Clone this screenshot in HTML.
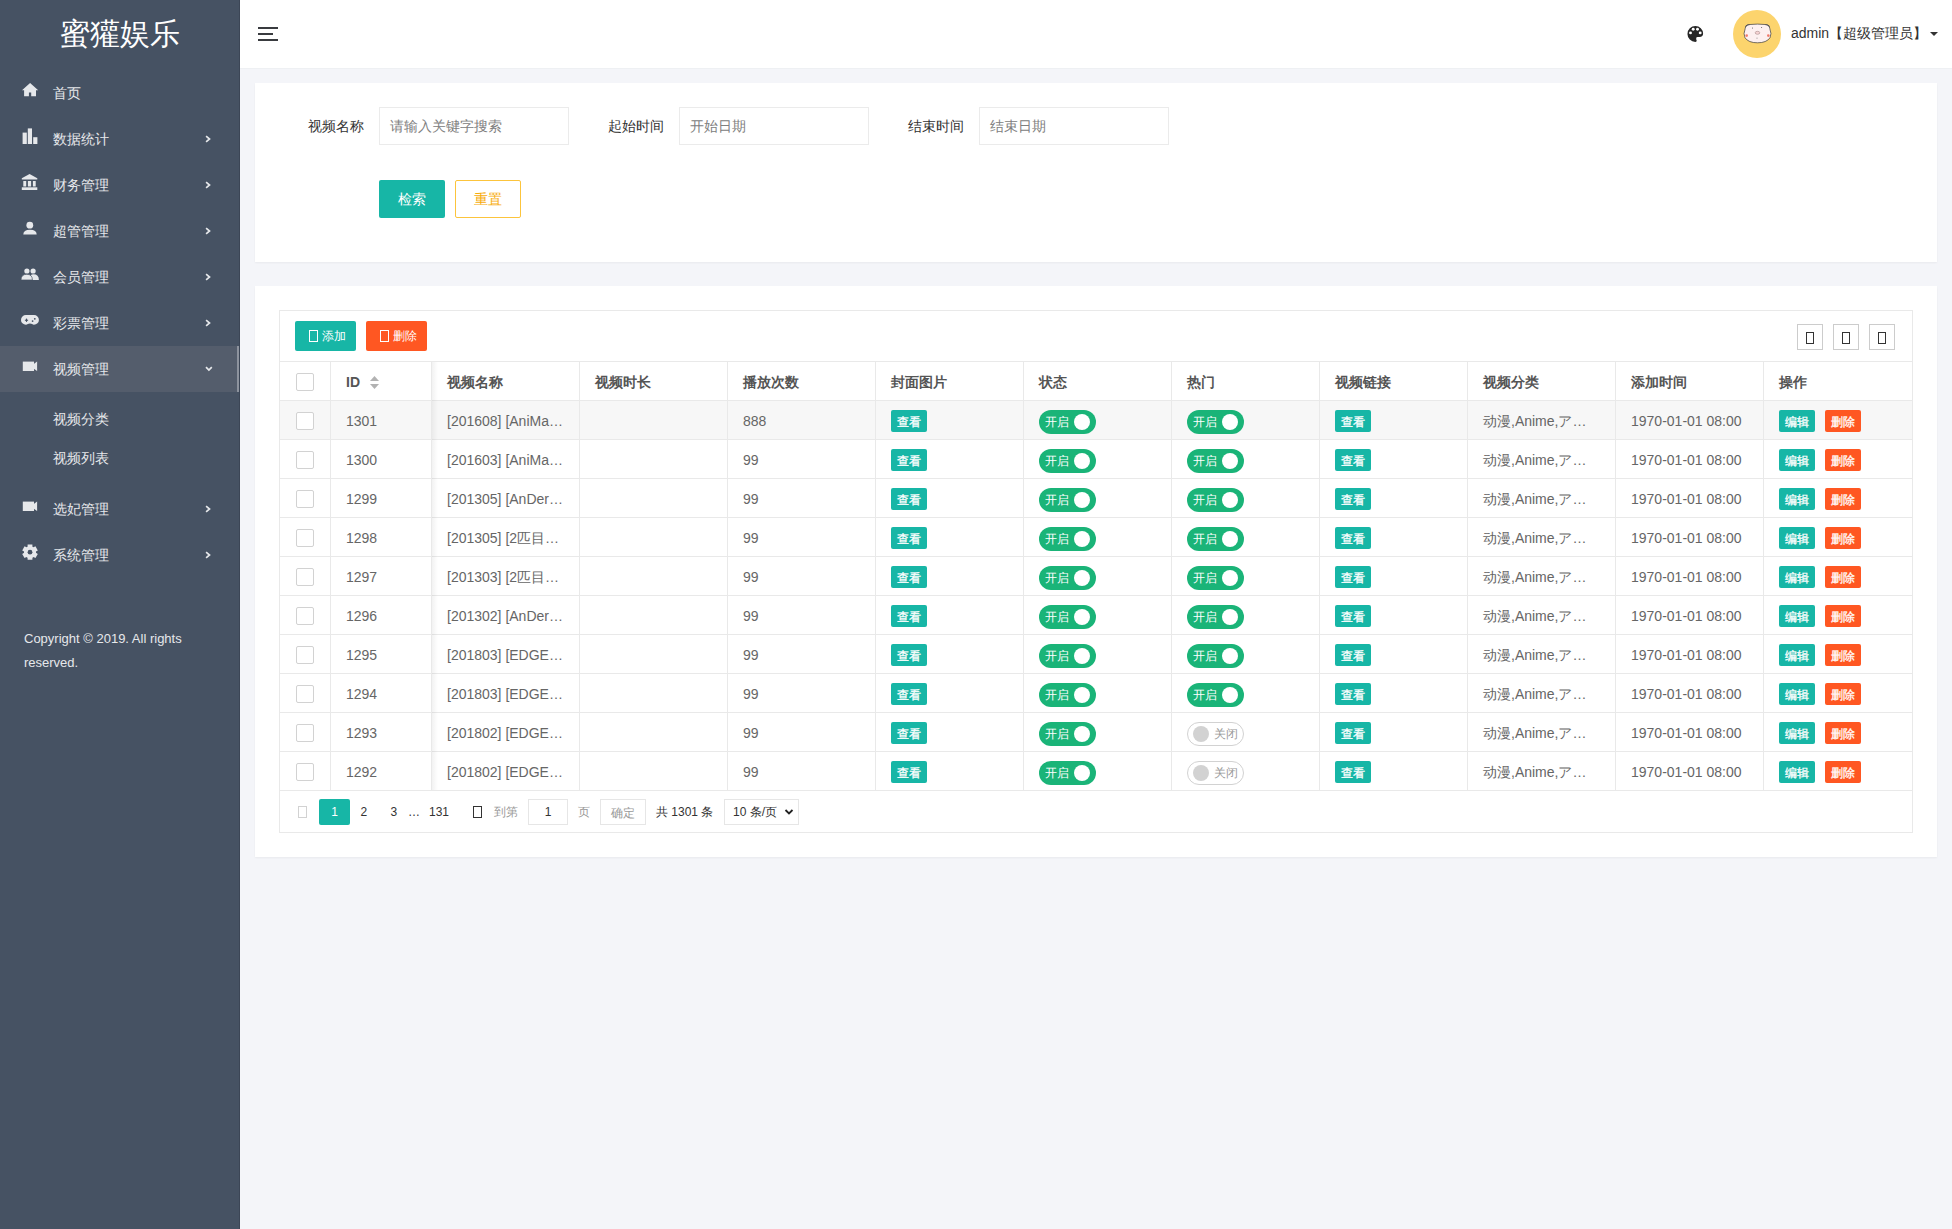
<!DOCTYPE html>
<html><head><meta charset="utf-8">
<style>
*{margin:0;padding:0;box-sizing:border-box;}
html,body{width:1952px;height:1229px;overflow:hidden;}
body{font-family:"Liberation Sans",sans-serif;background:#f4f5f9;position:relative;color:#666;font-size:14px;}
.abs{position:absolute;}
#side{position:absolute;left:0;top:0;width:240px;height:1229px;background:#465263;}
#logo{position:absolute;left:0;top:12px;width:240px;text-align:center;color:#fff;font-size:30px;line-height:44px;}
.nt{position:absolute;left:53px;line-height:47px;color:#e6e8eb;font-size:14px;white-space:nowrap;}
.nav .t{position:absolute;left:53px;top:0;line-height:46px;}
.nav .ic{position:absolute;left:22px;top:14px;width:16px;height:16px;}
.nav .ar{position:absolute;left:204px;top:16px;width:8px;height:10px;}
.nav.act{background:#535d6e;}
#copy{position:absolute;left:24px;top:627px;color:#e6e8eb;font-size:13px;line-height:24px;width:200px;}
#head{position:absolute;left:240px;top:0;width:1712px;height:68px;background:#fff;box-shadow:0 1px 0 #eef0f3;}
.card{position:absolute;background:#fff;box-shadow:0 1px 2px rgba(0,0,0,0.05);}
.lbl{position:absolute;color:#333;font-size:14px;line-height:38px;}
.inp{position:absolute;height:38px;width:190px;border:1px solid #ebebeb;background:#fff;color:#808080;font-size:14px;line-height:36px;padding-left:10px;}
.btn{position:absolute;color:#fff;text-align:center;font-size:14px;}
.tofu{display:inline-block;width:8px;height:13px;border:1px solid currentColor;vertical-align:-1px;}
.hl{position:absolute;background:#e9e9e9;height:1px;}
.vl{position:absolute;background:#e9e9e9;width:1px;}
.cell{position:absolute;line-height:39px;font-size:14px;color:#666;white-space:nowrap;}
.th{font-weight:bold;color:#555;}
.cb{position:absolute;width:18px;height:18px;border:1px solid #d2d2d2;border-radius:2px;background:#fff;}
.vbtn{position:absolute;-webkit-text-stroke:0.3px #fff;width:36px;height:22px;background:#17b6a6;color:#fff;font-size:12px;line-height:24px;text-align:center;border-radius:2px;}
.sw{position:absolute;width:57px;height:24px;border-radius:12px;background:#1ab478;color:#fff;font-size:12px;line-height:24px;}
.sw span{position:absolute;left:6px;top:0;}
.sw i{position:absolute;left:35px;top:4px;width:16px;height:16px;border-radius:50%;background:#fff;}
.sw.off{background:#fff;border:1px solid #d2d2d2;color:#999;}
.sw.off span{left:auto;right:5.5px;top:-1px;}
.sw.off i{left:5px;top:3px;background:#d2d2d2;}
.ebtn{position:absolute;-webkit-text-stroke:0.3px #fff;width:36px;height:22px;color:#fff;font-size:12px;line-height:24px;text-align:center;border-radius:2px;}
</style></head><body>
<div id="side">
<div id="logo">蜜獾娱乐</div>
<svg class="abs" style="left:21px;top:82px" width="18" height="17" viewBox="0 0 18 17"><path d="M9.1 0.9 L1 8.2 H3.1 V14.3 H7.9 V10.4 H10.2 V14.3 H15 V8.2 H17.2 Z" fill="#e6e8eb"/></svg>
<div class="nt" style="top:70px">首页</div>
<svg class="abs" style="left:21px;top:128px" width="18" height="17" viewBox="0 0 18 17"><rect x="1.6" y="4.6" width="4.2" height="11.4" fill="#e6e8eb"/><rect x="6.8" y="0.4" width="4.2" height="15.6" fill="#e6e8eb"/><rect x="12.2" y="9.2" width="4.2" height="6.8" fill="#e6e8eb"/></svg>
<div class="nt" style="top:116px">数据统计</div>
<svg class="abs" style="left:205px;top:135px" width="6" height="8" viewBox="0 0 6 8"><path d="M1.1 1.2 L4.5 4 L1.1 6.8" stroke="#e6e8eb" stroke-width="1.7" fill="none"/></svg>
<svg class="abs" style="left:21px;top:174px" width="18" height="17" viewBox="0 0 18 17"><path d="M8.55 0 L0.8 4.2 V5.5 H16.3 V4.2 Z" fill="#e6e8eb"/><rect x="2.3" y="7" width="2.9" height="5.5" fill="#e6e8eb"/><rect x="6.9" y="7" width="3.2" height="5.5" fill="#e6e8eb"/><rect x="11.9" y="7" width="2.8" height="5.5" fill="#e6e8eb"/><rect x="0.8" y="13.3" width="15.5" height="2.7" fill="#e6e8eb"/></svg>
<div class="nt" style="top:162px">财务管理</div>
<svg class="abs" style="left:205px;top:181px" width="6" height="8" viewBox="0 0 6 8"><path d="M1.1 1.2 L4.5 4 L1.1 6.8" stroke="#e6e8eb" stroke-width="1.7" fill="none"/></svg>
<svg class="abs" style="left:21px;top:220px" width="18" height="17" viewBox="0 0 18 17"><circle cx="8.8" cy="5.2" r="3.4" fill="#e6e8eb"/><path d="M2.3 14.5 Q2.3 9.7 9 9.7 Q15.7 9.7 15.7 14.5 Z" fill="#e6e8eb"/></svg>
<div class="nt" style="top:208px">超管管理</div>
<svg class="abs" style="left:205px;top:227px" width="6" height="8" viewBox="0 0 6 8"><path d="M1.1 1.2 L4.5 4 L1.1 6.8" stroke="#e6e8eb" stroke-width="1.7" fill="none"/></svg>
<svg class="abs" style="left:21px;top:266px" width="18" height="17" viewBox="0 0 18 17"><circle cx="5.9" cy="5" r="2.6" fill="#e6e8eb"/><circle cx="12.1" cy="5" r="2.6" fill="#e6e8eb"/><path d="M8.5 14 Q8.5 8.3 12.4 8.3 Q17.9 8.3 17.9 14 Z" fill="#e6e8eb"/><path d="M0 14 Q0 8.3 5.8 8.3 Q11.4 8.3 11.4 14 Z" fill="#e6e8eb" stroke="#465263" stroke-width="0.7"/></svg>
<div class="nt" style="top:254px">会员管理</div>
<svg class="abs" style="left:205px;top:273px" width="6" height="8" viewBox="0 0 6 8"><path d="M1.1 1.2 L4.5 4 L1.1 6.8" stroke="#e6e8eb" stroke-width="1.7" fill="none"/></svg>
<svg class="abs" style="left:21px;top:312px" width="18" height="17" viewBox="0 0 18 17"><path d="M4.9 3 H13 A4.9 4.9 0 0 1 13 12.8 C11.5 12.8 10.7 11.6 8.95 11.6 C7.2 11.6 6.4 12.8 4.9 12.8 A4.9 4.9 0 0 1 4.9 3 Z" fill="#e6e8eb"/><rect x="3.9" y="7.7" width="3.2" height="1.1" fill="#465263"/><rect x="4.95" y="6.6" width="1.1" height="3.3" fill="#465263"/><circle cx="11.6" cy="9.1" r="0.9" fill="#465263"/><circle cx="13.8" cy="6.8" r="0.9" fill="#465263"/></svg>
<div class="nt" style="top:300px">彩票管理</div>
<svg class="abs" style="left:205px;top:319px" width="6" height="8" viewBox="0 0 6 8"><path d="M1.1 1.2 L4.5 4 L1.1 6.8" stroke="#e6e8eb" stroke-width="1.7" fill="none"/></svg>
<div class="abs" style="left:0;top:346px;width:240px;height:46px;background:#545d6c"></div>
<svg class="abs" style="left:21px;top:358px" width="18" height="17" viewBox="0 0 18 17"><rect x="1.8" y="3.6" width="11.2" height="9.4" fill="#e6e8eb"/><path d="M12.5 6.2 L16.1 3.6 V13 L12.5 10.4 Z" fill="#e6e8eb"/></svg>
<div class="nt" style="top:346px">视频管理</div>
<svg class="abs" style="left:205px;top:366px" width="8" height="6" viewBox="0 0 8 6"><path d="M1 1.1 L3.9 4.1 L6.8 1.1" stroke="#e6e8eb" stroke-width="1.7" fill="none"/></svg>
<div class="abs" style="left:237px;top:346px;width:3px;height:46px;background:#8d939e"></div>
<div class="nt" style="top:396px">视频分类</div>
<div class="nt" style="top:435px">视频列表</div>
<svg class="abs" style="left:21px;top:498px" width="18" height="17" viewBox="0 0 18 17"><rect x="1.8" y="3.6" width="11.2" height="9.4" fill="#e6e8eb"/><path d="M12.5 6.2 L16.1 3.6 V13 L12.5 10.4 Z" fill="#e6e8eb"/></svg>
<div class="nt" style="top:486px">选妃管理</div>
<svg class="abs" style="left:205px;top:505px" width="6" height="8" viewBox="0 0 6 8"><path d="M1.1 1.2 L4.5 4 L1.1 6.8" stroke="#e6e8eb" stroke-width="1.7" fill="none"/></svg>
<svg class="abs" style="left:21px;top:544px" width="18" height="17" viewBox="0 0 18 17"><path d="M6.00 3.00 L6.55 2.72 L6.64 0.56 L11.36 0.56 L11.45 2.72 L12.00 3.00 L12.52 3.34 L14.44 2.33 L16.80 6.43 L14.97 7.58 L15.00 8.20 L14.97 8.82 L16.80 9.97 L14.44 14.07 L12.52 13.06 L12.00 13.40 L11.45 13.68 L11.36 15.84 L6.64 15.84 L6.55 13.68 L6.00 13.40 L5.48 13.06 L3.56 14.07 L1.20 9.97 L3.03 8.82 L3.00 8.20 L3.03 7.58 L1.20 6.43 L3.56 2.33 L5.48 3.34Z" fill="#e6e8eb"/><circle cx="9" cy="8.2" r="2.4" fill="#465263"/></svg>
<div class="nt" style="top:532px">系统管理</div>
<svg class="abs" style="left:205px;top:551px" width="6" height="8" viewBox="0 0 6 8"><path d="M1.1 1.2 L4.5 4 L1.1 6.8" stroke="#e6e8eb" stroke-width="1.7" fill="none"/></svg>
<div id="copy">Copyright © 2019. All rights reserved.</div>
<div class="abs" style="left:239px;top:0;width:1px;height:1229px;background:#3c4656"></div>
</div>
<div id="head">
<svg class="abs" style="left:18px;top:27px" width="20" height="14" viewBox="0 0 20 14"><rect x="0" y="0" width="20" height="2" fill="#393b3f"/><rect x="0" y="6" width="15" height="2" fill="#393b3f"/><rect x="0" y="12" width="20" height="2" fill="#393b3f"/></svg>
<svg class="abs" style="left:1447px;top:25px" width="18" height="18" viewBox="0 0 18 18"><path d="M8.4 1 A7.7 7.7 0 0 1 16.1 8.6 Q16.1 12 12.5 12 H10.6 Q9.2 12 9.2 13.4 Q9.2 14.8 9.7 15.6 Q9.9 16.9 8.4 16.9 A7.95 7.95 0 0 1 8.4 1Z" fill="#262626"/><circle cx="6.2" cy="4.3" r="1.45" fill="#fff"/><circle cx="10.5" cy="4.3" r="1.45" fill="#fff"/><circle cx="3.5" cy="7.9" r="1.45" fill="#fff"/><circle cx="13.2" cy="7.9" r="1.45" fill="#fff"/></svg>
<div class="abs" style="left:1493px;top:10px;width:48px;height:48px;border-radius:50%;background:#fcd46d"></div>
<svg class="abs" style="left:1503px;top:23px" width="30" height="21" viewBox="0 0 30 21"><path d="M2.2 5.5 Q2 1.8 5.5 1.6 Q14.5 0.6 23.5 1.6 Q27 1.8 26.8 5.5 Q29 11 27 14.8 Q23.5 19.8 14.5 19.8 Q5.5 19.8 2 14.8 Q0 11 2.2 5.5Z" fill="#fdf0f0" stroke="#3a3a3a" stroke-width="0.7"/><path d="M2.6 4.2 Q3.5 1.2 6.5 1.7" fill="none" stroke="#3a3a3a" stroke-width="0.7"/><path d="M26.4 4.2 Q25.5 1.2 22.5 1.7" fill="none" stroke="#3a3a3a" stroke-width="0.7"/><ellipse cx="14.5" cy="9.8" rx="2.3" ry="1.5" fill="#f7d4d4" stroke="#9a7a7a" stroke-width="0.5"/><circle cx="9.5" cy="5" r="0.5" fill="#555"/><circle cx="18.6" cy="4.6" r="0.5" fill="#555"/><circle cx="3.7" cy="12.6" r="1.3" fill="#f07a6a"/><circle cx="25.3" cy="12.6" r="1.3" fill="#f07a6a"/><path d="M14 14.5 v1.5" stroke="#777" stroke-width="0.5"/></svg>
<div class="abs" style="left:1551px;top:22px;font-size:14px;line-height:22px;color:#333;white-space:nowrap">admin【超级管理员】</div>
<svg class="abs" style="left:1689.5px;top:32px" width="8" height="4" viewBox="0 0 8 4"><path d="M0 0h8L4 4z" fill="#333"/></svg>
</div>
<div class="card" style="left:255px;top:83px;width:1682px;height:179px"></div>
<div class="lbl" style="left:308px;top:107px">视频名称</div>
<div class="inp" style="left:379px;top:107px">请输入关键字搜索</div>
<div class="lbl" style="left:608px;top:107px">起始时间</div>
<div class="inp" style="left:679px;top:107px">开始日期</div>
<div class="lbl" style="left:908px;top:107px">结束时间</div>
<div class="inp" style="left:979px;top:107px">结束日期</div>
<div class="btn" style="left:379px;top:180px;width:66px;height:38px;line-height:38px;background:#17b6a6;border-radius:2px">检索</div>
<div class="btn" style="left:455px;top:180px;width:66px;height:38px;line-height:36px;background:#fff;border:1px solid #fcc43c;color:#f7ac0a;border-radius:2px">重置</div>
<div class="card" style="left:255px;top:286px;width:1682px;height:571px"></div>
<div class="abs" style="left:279px;top:310px;width:1634px;height:523px;border:1px solid #e9e9e9"></div>
<div class="btn" style="left:295px;top:321px;width:61px;height:30px;line-height:30px;background:#17b6a6;border-radius:2px;font-size:12px;text-align:left;padding-left:14px"><span class="tofu" style="width:9px;height:12px;margin-right:4px;vertical-align:-2px"></span>添加</div>
<div class="btn" style="left:366px;top:321px;width:61px;height:30px;line-height:30px;background:#ff5722;border-radius:2px;font-size:12px;text-align:left;padding-left:14px"><span class="tofu" style="width:9px;height:12px;margin-right:4px;vertical-align:-2px"></span>删除</div>
<div class="abs" style="left:1797px;top:324px;width:26px;height:26px;border:1px solid #ccc"></div><div class="abs" style="left:1806px;top:332px;width:8px;height:12px;border:1px solid #333"></div>
<div class="abs" style="left:1833px;top:324px;width:26px;height:26px;border:1px solid #ccc"></div><div class="abs" style="left:1842px;top:332px;width:8px;height:12px;border:1px solid #333"></div>
<div class="abs" style="left:1869px;top:324px;width:26px;height:26px;border:1px solid #ccc"></div><div class="abs" style="left:1878px;top:332px;width:8px;height:12px;border:1px solid #333"></div>
<div class="hl" style="left:279px;top:361px;width:1634px"></div>
<div class="hl" style="left:279px;top:400px;width:1634px"></div>
<div class="hl" style="left:279px;top:439px;width:1634px"></div>
<div class="hl" style="left:279px;top:478px;width:1634px"></div>
<div class="hl" style="left:279px;top:517px;width:1634px"></div>
<div class="hl" style="left:279px;top:556px;width:1634px"></div>
<div class="hl" style="left:279px;top:595px;width:1634px"></div>
<div class="hl" style="left:279px;top:634px;width:1634px"></div>
<div class="hl" style="left:279px;top:673px;width:1634px"></div>
<div class="hl" style="left:279px;top:712px;width:1634px"></div>
<div class="hl" style="left:279px;top:751px;width:1634px"></div>
<div class="hl" style="left:279px;top:790px;width:1634px"></div>
<div class="abs" style="left:280px;top:401px;width:1632px;height:38px;background:#f7f7f7"></div>
<div class="vl" style="left:330px;top:362px;height:428px"></div>
<div class="vl" style="left:431px;top:362px;height:428px"></div>
<div class="vl" style="left:579px;top:362px;height:428px"></div>
<div class="vl" style="left:727px;top:362px;height:428px"></div>
<div class="vl" style="left:875px;top:362px;height:428px"></div>
<div class="vl" style="left:1023px;top:362px;height:428px"></div>
<div class="vl" style="left:1171px;top:362px;height:428px"></div>
<div class="vl" style="left:1319px;top:362px;height:428px"></div>
<div class="vl" style="left:1467px;top:362px;height:428px"></div>
<div class="vl" style="left:1615px;top:362px;height:428px"></div>
<div class="vl" style="left:1763px;top:362px;height:428px"></div>
<div class="abs" style="left:432px;top:362px;width:6px;height:428px;background:linear-gradient(to right,rgba(0,0,0,0.05),rgba(0,0,0,0))"></div>
<div class="cell th" style="left:346px;top:362.5px">ID</div>
<div class="cell th" style="left:447px;top:362.5px">视频名称</div>
<div class="cell th" style="left:595px;top:362.5px">视频时长</div>
<div class="cell th" style="left:743px;top:362.5px">播放次数</div>
<div class="cell th" style="left:891px;top:362.5px">封面图片</div>
<div class="cell th" style="left:1039px;top:362.5px">状态</div>
<div class="cell th" style="left:1187px;top:362.5px">热门</div>
<div class="cell th" style="left:1335px;top:362.5px">视频链接</div>
<div class="cell th" style="left:1483px;top:362.5px">视频分类</div>
<div class="cell th" style="left:1631px;top:362.5px">添加时间</div>
<div class="cell th" style="left:1779px;top:362.5px">操作</div>
<svg class="abs" style="left:370px;top:376px" width="9" height="13" viewBox="0 0 9 13"><path d="M4.5 0L9 5H0z" fill="#b2b2b2"/><path d="M4.5 13L9 8H0z" fill="#b2b2b2"/></svg>
<div class="cb" style="left:296px;top:373px"></div>
<div class="cb" style="left:296px;top:412px"></div>
<div class="cell" style="left:346px;top:402px">1301</div>
<div class="cell" style="left:447px;top:402px">[201608] [AniMa…</div>
<div class="cell" style="left:743px;top:402px">888</div>
<div class="vbtn" style="left:891px;top:410px">查看</div>
<div class="sw" style="left:1039px;top:410px"><span>开启</span><i></i></div>
<div class="sw" style="left:1187px;top:410px"><span>开启</span><i></i></div>
<div class="vbtn" style="left:1335px;top:410px">查看</div>
<div class="cell" style="left:1483px;top:402px">动漫,Anime,ア…</div>
<div class="cell" style="left:1631px;top:402px">1970-01-01 08:00</div>
<div class="ebtn" style="left:1779px;top:410px;background:#17b6a6">编辑</div>
<div class="ebtn" style="left:1825px;top:410px;background:#ff5722">删除</div>
<div class="cb" style="left:296px;top:451px"></div>
<div class="cell" style="left:346px;top:441px">1300</div>
<div class="cell" style="left:447px;top:441px">[201603] [AniMa…</div>
<div class="cell" style="left:743px;top:441px">99</div>
<div class="vbtn" style="left:891px;top:449px">查看</div>
<div class="sw" style="left:1039px;top:449px"><span>开启</span><i></i></div>
<div class="sw" style="left:1187px;top:449px"><span>开启</span><i></i></div>
<div class="vbtn" style="left:1335px;top:449px">查看</div>
<div class="cell" style="left:1483px;top:441px">动漫,Anime,ア…</div>
<div class="cell" style="left:1631px;top:441px">1970-01-01 08:00</div>
<div class="ebtn" style="left:1779px;top:449px;background:#17b6a6">编辑</div>
<div class="ebtn" style="left:1825px;top:449px;background:#ff5722">删除</div>
<div class="cb" style="left:296px;top:490px"></div>
<div class="cell" style="left:346px;top:480px">1299</div>
<div class="cell" style="left:447px;top:480px">[201305] [AnDer…</div>
<div class="cell" style="left:743px;top:480px">99</div>
<div class="vbtn" style="left:891px;top:488px">查看</div>
<div class="sw" style="left:1039px;top:488px"><span>开启</span><i></i></div>
<div class="sw" style="left:1187px;top:488px"><span>开启</span><i></i></div>
<div class="vbtn" style="left:1335px;top:488px">查看</div>
<div class="cell" style="left:1483px;top:480px">动漫,Anime,ア…</div>
<div class="cell" style="left:1631px;top:480px">1970-01-01 08:00</div>
<div class="ebtn" style="left:1779px;top:488px;background:#17b6a6">编辑</div>
<div class="ebtn" style="left:1825px;top:488px;background:#ff5722">删除</div>
<div class="cb" style="left:296px;top:529px"></div>
<div class="cell" style="left:346px;top:519px">1298</div>
<div class="cell" style="left:447px;top:519px">[201305] [2匹目…</div>
<div class="cell" style="left:743px;top:519px">99</div>
<div class="vbtn" style="left:891px;top:527px">查看</div>
<div class="sw" style="left:1039px;top:527px"><span>开启</span><i></i></div>
<div class="sw" style="left:1187px;top:527px"><span>开启</span><i></i></div>
<div class="vbtn" style="left:1335px;top:527px">查看</div>
<div class="cell" style="left:1483px;top:519px">动漫,Anime,ア…</div>
<div class="cell" style="left:1631px;top:519px">1970-01-01 08:00</div>
<div class="ebtn" style="left:1779px;top:527px;background:#17b6a6">编辑</div>
<div class="ebtn" style="left:1825px;top:527px;background:#ff5722">删除</div>
<div class="cb" style="left:296px;top:568px"></div>
<div class="cell" style="left:346px;top:558px">1297</div>
<div class="cell" style="left:447px;top:558px">[201303] [2匹目…</div>
<div class="cell" style="left:743px;top:558px">99</div>
<div class="vbtn" style="left:891px;top:566px">查看</div>
<div class="sw" style="left:1039px;top:566px"><span>开启</span><i></i></div>
<div class="sw" style="left:1187px;top:566px"><span>开启</span><i></i></div>
<div class="vbtn" style="left:1335px;top:566px">查看</div>
<div class="cell" style="left:1483px;top:558px">动漫,Anime,ア…</div>
<div class="cell" style="left:1631px;top:558px">1970-01-01 08:00</div>
<div class="ebtn" style="left:1779px;top:566px;background:#17b6a6">编辑</div>
<div class="ebtn" style="left:1825px;top:566px;background:#ff5722">删除</div>
<div class="cb" style="left:296px;top:607px"></div>
<div class="cell" style="left:346px;top:597px">1296</div>
<div class="cell" style="left:447px;top:597px">[201302] [AnDer…</div>
<div class="cell" style="left:743px;top:597px">99</div>
<div class="vbtn" style="left:891px;top:605px">查看</div>
<div class="sw" style="left:1039px;top:605px"><span>开启</span><i></i></div>
<div class="sw" style="left:1187px;top:605px"><span>开启</span><i></i></div>
<div class="vbtn" style="left:1335px;top:605px">查看</div>
<div class="cell" style="left:1483px;top:597px">动漫,Anime,ア…</div>
<div class="cell" style="left:1631px;top:597px">1970-01-01 08:00</div>
<div class="ebtn" style="left:1779px;top:605px;background:#17b6a6">编辑</div>
<div class="ebtn" style="left:1825px;top:605px;background:#ff5722">删除</div>
<div class="cb" style="left:296px;top:646px"></div>
<div class="cell" style="left:346px;top:636px">1295</div>
<div class="cell" style="left:447px;top:636px">[201803] [EDGE…</div>
<div class="cell" style="left:743px;top:636px">99</div>
<div class="vbtn" style="left:891px;top:644px">查看</div>
<div class="sw" style="left:1039px;top:644px"><span>开启</span><i></i></div>
<div class="sw" style="left:1187px;top:644px"><span>开启</span><i></i></div>
<div class="vbtn" style="left:1335px;top:644px">查看</div>
<div class="cell" style="left:1483px;top:636px">动漫,Anime,ア…</div>
<div class="cell" style="left:1631px;top:636px">1970-01-01 08:00</div>
<div class="ebtn" style="left:1779px;top:644px;background:#17b6a6">编辑</div>
<div class="ebtn" style="left:1825px;top:644px;background:#ff5722">删除</div>
<div class="cb" style="left:296px;top:685px"></div>
<div class="cell" style="left:346px;top:675px">1294</div>
<div class="cell" style="left:447px;top:675px">[201803] [EDGE…</div>
<div class="cell" style="left:743px;top:675px">99</div>
<div class="vbtn" style="left:891px;top:683px">查看</div>
<div class="sw" style="left:1039px;top:683px"><span>开启</span><i></i></div>
<div class="sw" style="left:1187px;top:683px"><span>开启</span><i></i></div>
<div class="vbtn" style="left:1335px;top:683px">查看</div>
<div class="cell" style="left:1483px;top:675px">动漫,Anime,ア…</div>
<div class="cell" style="left:1631px;top:675px">1970-01-01 08:00</div>
<div class="ebtn" style="left:1779px;top:683px;background:#17b6a6">编辑</div>
<div class="ebtn" style="left:1825px;top:683px;background:#ff5722">删除</div>
<div class="cb" style="left:296px;top:724px"></div>
<div class="cell" style="left:346px;top:714px">1293</div>
<div class="cell" style="left:447px;top:714px">[201802] [EDGE…</div>
<div class="cell" style="left:743px;top:714px">99</div>
<div class="vbtn" style="left:891px;top:722px">查看</div>
<div class="sw" style="left:1039px;top:722px"><span>开启</span><i></i></div>
<div class="sw off" style="left:1187px;top:722px"><i></i><span>关闭</span></div>
<div class="vbtn" style="left:1335px;top:722px">查看</div>
<div class="cell" style="left:1483px;top:714px">动漫,Anime,ア…</div>
<div class="cell" style="left:1631px;top:714px">1970-01-01 08:00</div>
<div class="ebtn" style="left:1779px;top:722px;background:#17b6a6">编辑</div>
<div class="ebtn" style="left:1825px;top:722px;background:#ff5722">删除</div>
<div class="cb" style="left:296px;top:763px"></div>
<div class="cell" style="left:346px;top:753px">1292</div>
<div class="cell" style="left:447px;top:753px">[201802] [EDGE…</div>
<div class="cell" style="left:743px;top:753px">99</div>
<div class="vbtn" style="left:891px;top:761px">查看</div>
<div class="sw" style="left:1039px;top:761px"><span>开启</span><i></i></div>
<div class="sw off" style="left:1187px;top:761px"><i></i><span>关闭</span></div>
<div class="vbtn" style="left:1335px;top:761px">查看</div>
<div class="cell" style="left:1483px;top:753px">动漫,Anime,ア…</div>
<div class="cell" style="left:1631px;top:753px">1970-01-01 08:00</div>
<div class="ebtn" style="left:1779px;top:761px;background:#17b6a6">编辑</div>
<div class="ebtn" style="left:1825px;top:761px;background:#ff5722">删除</div>
<span class="abs tofu" style="left:298px;top:806px;width:9px;height:12px;color:#d2d2d2"></span>
<div class="abs" style="left:319px;top:799px;width:31px;height:26px;background:#17b6a6;color:#fff;text-align:center;line-height:26px;font-size:12px;border-radius:2px">1</div>
<div class="abs" style="left:360.5px;top:799px;line-height:26px;font-size:12px;color:#333">2</div>
<div class="abs" style="left:390.5px;top:799px;line-height:26px;font-size:12px;color:#333">3</div>
<div class="abs" style="left:408px;top:799px;line-height:26px;font-size:12px;color:#333">…</div>
<div class="abs" style="left:429px;top:799px;line-height:26px;font-size:12px;color:#333">131</div>
<span class="abs tofu" style="left:473px;top:806px;width:9px;height:12px;color:#333"></span>
<div class="abs" style="left:494px;top:799px;line-height:26px;font-size:12px;color:#999">到第</div>
<div class="abs" style="left:528px;top:799px;width:40px;height:26px;border:1px solid #e6e6e6;text-align:center;line-height:24px;font-size:12px;color:#333">1</div>
<div class="abs" style="left:578px;top:799px;line-height:26px;font-size:12px;color:#999">页</div>
<div class="abs" style="left:600px;top:799px;width:46px;height:26px;border:1px solid #e6e6e6;text-align:center;line-height:26px;font-size:12px;color:#999">确定</div>
<div class="abs" style="left:656px;top:799px;line-height:26px;font-size:12px;color:#333;white-space:nowrap">共 1301 条</div>
<div class="abs" style="left:724px;top:799px;width:75px;height:26px;border:1px solid #e6e6e6;line-height:24px;font-size:12px;color:#333;padding-left:8px;white-space:nowrap">10 条/页</div>
<svg class="abs" style="left:784px;top:808px" width="10" height="8" viewBox="0 0 10 8"><path d="M1.5 2l3.5 3.5L8.5 2" stroke="#222" stroke-width="1.8" fill="none"/></svg>
</body></html>
